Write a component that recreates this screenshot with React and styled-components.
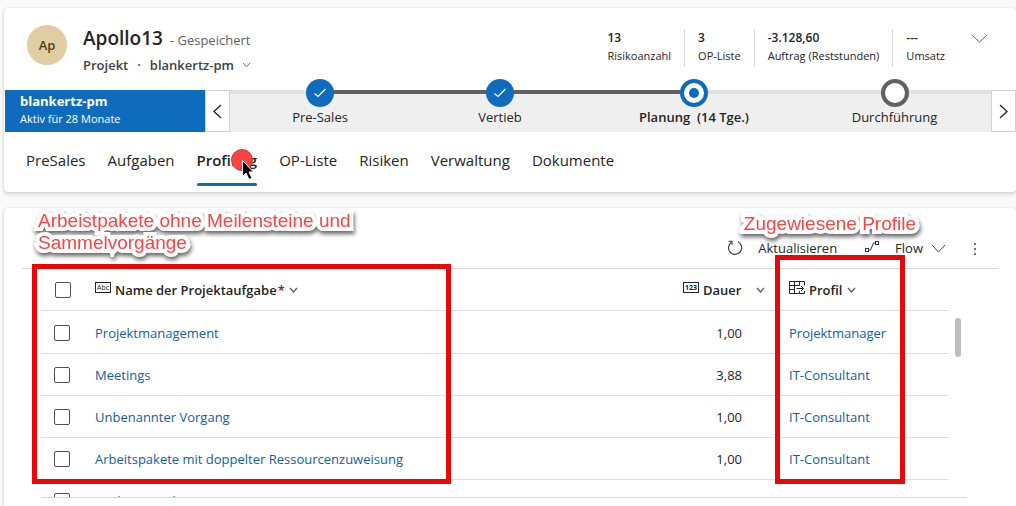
import React from "react";
import styled, { createGlobalStyle, css } from "styled-components";

const Global = createGlobalStyle`
  *, *::before, *::after { box-sizing: border-box; }
  html, body { margin: 0; height: 100%; overflow: hidden; }
  body {
    background: #fafafa;
    color: #242424;
    font-family: "Open Sans", "Noto Sans", sans-serif;
    font-size: 13px;
    line-height: 20px;
  }
  #root { height: 100%; }
  button { font: inherit; color: inherit; background: none; border: 0; padding: 0; cursor: pointer; }
  svg { display: block; flex: none; }
`;

const Page = styled.main`
  height: 100%;
  padding: 8px 0 0 4px;
  display: flex;
  flex-direction: column;
  gap: 16px;
`;

const Card = styled.section`
  background: #fff;
  border-radius: 4px;
  box-shadow: 0 0 2px rgba(0, 0, 0, 0.14), 0 2px 4px rgba(0, 0, 0, 0.14);
`;

const GridCard = styled(Card)`
  position: relative;
  flex: 1;
  border-radius: 4px 4px 0 0;
`;

const RecordHeader = styled.header`
  display: flex;
  align-items: flex-start;
  justify-content: space-between;
  height: 82px;
  padding: 17px 28px 0 23px;
`;

const Identity = styled.div`
  display: flex;
  gap: 16px;
`;

const Avatar = styled.div`
  width: 40px;
  height: 40px;
  border-radius: 50%;
  background: #e0cda2;
  color: #4f3f0c;
  font-weight: 600;
  line-height: 40px;
  text-align: center;
`;

const TitleRow = styled.div`
  display: flex;
  align-items: baseline;
  gap: 7px;
`;

const Title = styled.h1`
  margin: 0;
  font-size: 19px;
  font-weight: 600;
  line-height: 27px;
`;

const SaveState = styled.span`
  color: #616161;
`;

const SubRow = styled.div`
  display: flex;
  align-items: center;
  gap: 9px;
  padding-top: 3px;
  font-weight: 600;
  color: #424242;
`;

const FormPicker = styled.button`
  display: flex;
  align-items: center;
  gap: 8px;
  && { font-weight: 600; }
`;

const HeaderFields = styled.div`
  display: flex;
  align-items: flex-start;
  padding-top: 4px;
`;

const Field = styled.dl`
  margin: 0;
  padding: 0 13px;
  height: 38px;
  border-left: ${(p) => (p.$first ? "0" : "1px solid #d6d6d6")};
  font-size: 11px;
  line-height: 18px;
  display: flex;
  flex-direction: column-reverse;
  justify-content: flex-end;
`;
const FieldLabel = styled.dt``;
const FieldValue = styled.dd`
  margin: 0;
  font-size: 12px;
  font-weight: 600;
`;

const Expand = styled.button`
  margin: 5px 0 0 13px;
`;

const Process = styled.div`
  display: flex;
  height: 42px;
  margin-left: 1px;
`;

const ProcessName = styled.div`
  width: 200px;
  padding: 2px 15px;
  background: #0f6cbd;
  color: #fff;
  font-size: 11px;
  line-height: 18px;
`;

const Strong = styled.div`
  font-size: 13px;
  font-weight: 700;
`;

const Scroller = styled.button`
  width: 25px;
  display: flex;
  align-items: center;
  justify-content: center;
  && { background: #fff; border: 1px solid #d1d1d1; }
`;

const Stages = styled.ol`
  flex: 1;
  display: grid;
  grid-template-columns: 180fr 180fr 208fr 193fr;
  margin: 0;
  padding: 0;
  list-style: none;
  background: #efefef;
`;

const line = (done) => (done ? "#616161" : "#e0e0e0");

const Stage = styled.li`
  display: flex;
  flex-direction: column;
  align-items: center;
  background: linear-gradient(to right, ${(p) => line(p.$before)} 50%, ${(p) => line(p.$after)} 50%) top / 100% 4px no-repeat;
  font-weight: ${(p) => (p.$active ? 600 : 400)};
  white-space: pre;
`;

const markers = {
  done: css`background: #0f6cbd;`,
  active: css`background: #fff; border: 4px solid #0f6cbd;`,
  open: css`background: #fff; border: 4px solid #616161;`,
};

const Marker = styled.button`
  display: flex;
  align-items: center;
  justify-content: center;
  width: 28px;
  height: 28px;
  margin: -11px 0 0;
  && { border-radius: 50%; ${(p) => markers[p.$kind]} }
`;

const Dot = styled.span`
  width: 10px;
  height: 10px;
  border-radius: 50%;
  background: #0f6cbd;
`;

const Tabs = styled.nav`
  display: flex;
  gap: 22px;
  height: 60px;
  padding: 12px 22px 6px;
`;

const Tab = styled.button`
  position: relative;
  && {
    font-size: 15px;
    font-weight: ${(p) => (p.$active ? 600 : 400)};
    padding-bottom: 10px;
  }
  height: 42px;
  &::after {
    content: "";
    position: absolute;
    inset: auto 0 0;
    height: 3px;
    border-radius: 2px;
    background: ${(p) => (p.$active ? "#0f6cbd" : "transparent")};
  }
`;

const Pointer = styled.svg`
  position: absolute;
  left: 33px;
  top: 4px;
`;

const Toolbar = styled.div`
  display: flex;
  justify-content: flex-end;
  align-items: flex-end;
  gap: 27px;
  height: 61px;
  margin: 0 18px;
  padding: 0 21px 10px 0;
  border-bottom: 1px solid #d6d6d6;
`;

const Command = styled.button`
  display: flex;
  align-items: center;
  height: 20px;
  gap: ${(p) => p.$gap || 0}px;
`;

const Viewport = styled.div`
  height: 229px;
  overflow: hidden;
  margin: 0 49px 0 37px;
  display: flex;
  gap: 6px;
  border-bottom: 1px solid #d6d6d6;
`;

const Table = styled.table`
  flex: 1;
  border-collapse: separate;
  border-spacing: 0;
  table-layout: fixed;
`;

const Th = styled.th`
  height: 42px;
  padding: 0 0 0 ${(p) => p.$pad || 0}px;
  border-bottom: 1px solid #e0e0e0;
  text-align: left;
  font-weight: 600;
  width: ${(p) => p.$w || "auto"};
`;

const Body = styled.tbody`
  &::before {
    content: "";
    display: block;
    height: 1px;
  }
`;

const Td = styled.td`
  height: 42px;
  padding: 0 ${(p) => p.$right || 0}px 0 ${(p) => p.$pad || 0}px;
  border-bottom: 1px solid #e0e0e0;
  text-align: ${(p) => (p.$right ? "right" : "left")};
  white-space: nowrap;
`;

const HeadButton = styled.button`
  display: flex;
  align-items: center;
  gap: 4px;
  && { font-weight: 600; }
`;

const Required = styled.span`
  color: #b10e1c;
  margin-left: 1px;
`;

const Spread = styled.span`
  margin-left: ${(p) => p.$by || 0}px;
`;

const Check = styled.input`
  appearance: none;
  display: block;
  width: 16px;
  height: 16px;
  margin: 0;
  border: 1px solid #505050;
  border-radius: 2px;
  background: #fff;
`;

const Link = styled.a`
  color: #115ea3;
  text-decoration: none;
`;

const Thumb = styled.div`
  width: 6px;
  height: 39px;
  margin: 49px 6px 0 0;
  border-radius: 3px;
  background: #bdbdbd;
`;

const Highlight = styled.div`
  position: absolute;
  border: 5px solid #eb0707;
  pointer-events: none;
`;

const TaskHighlight = styled(Highlight)`
  left: 28px;
  top: 56px;
  width: 419px;
  height: 220px;
`;

const ProfileHighlight = styled(Highlight)`
  right: 111px;
  top: 47px;
  width: 130px;
  height: 229px;
`;

const Note = styled.p`
  position: absolute;
  margin: 0;
  color: #ff4343;
  font-family: "Liberation Sans", Arial, sans-serif;
  font-size: 19px;
  line-height: 22px;
  white-space: pre;
  -webkit-text-stroke: 8px #fff;
  paint-order: stroke fill;
  stroke-linejoin: round;
  filter: drop-shadow(1px 3px 2px rgba(0, 0, 0, 0.6));
`;

const TaskNote = styled(Note)`
  left: 34px;
  top: 2px;
`;

const ProfileNote = styled(Note)`
  right: 100px;
  top: 5px;
`;

const Chevron = ({ w = 8, h = 5, dir = "down", color = "#424242", sw = 1 }) => (
  <svg width={w + 2} height={h + 2} viewBox={`-1 -1 ${w + 2} ${h + 2}`} fill="none" stroke={color} strokeWidth={sw}>
    {dir === "down" && <path d={`M0 0L${w / 2} ${h}L${w} 0`} />}
    {dir === "left" && <path d={`M${w} 0L0 ${h / 2}L${w} ${h}`} />}
    {dir === "right" && <path d={`M0 0L${w} ${h / 2}L0 ${h}`} />}
  </svg>
);

const Tick = () => (
  <svg width="14" height="12" viewBox="0 0 14 12" fill="none" stroke="#fff" strokeWidth="1.2">
    <path d="M1.5 6.5L5 9.5L12.5 2" />
  </svg>
);

const Refresh = () => (
  <svg width="16" height="16" viewBox="0 0 16 16" fill="none" stroke="#333" strokeWidth="1.1">
    <path d="M11 1.8A6.6 6.6 0 1 1 4.5 2.2" />
    <path d="M1.5 1.2H5V4.8" />
  </svg>
);

const FlowIcon = () => (
  <svg width="16" height="14" viewBox="0 0 16 14" fill="none" stroke="#333" strokeWidth="1">
    <rect x="1.5" y="7.5" width="3" height="3" />
    <rect x="11.5" y="0.5" width="3" height="3" />
    <path d="M4.5 9H6.5L9.5 2H11.5" />
  </svg>
);

const More = () => (
  <svg width="4" height="16" viewBox="0 0 4 16" fill="#424242">
    <circle cx="2" cy="4" r="1" />
    <circle cx="2" cy="9" r="1" />
    <circle cx="2" cy="14" r="1" />
  </svg>
);

const TypeBadge = styled.span`
  width: 16px;
  height: 11px;
  border: 1px solid #242424;
  font-size: 7px;
  font-weight: ${(p) => (p.$bold ? 700 : 400)};
  line-height: 9px;
  text-align: center;
  margin-bottom: 5px;
`;

const LookupIcon = () => (
  <svg width="16" height="18" viewBox="0 0 16 18" fill="none" stroke="#242424" strokeWidth="1">
    <path d="M0.5 0.5H15.5V4.5M0.5 0.5V12.5H10.5M0.5 4.5H10.5M0.5 8.5H5.5M5.5 0.5V12.5M10.5 0.5V4.5M10.5 10V12.5H15.5V10M7.5 7.5H14.5M12 5L14.5 7.5L12 10" />
  </svg>
);

const stages = [
  { label: "Pre-Sales", kind: "done", before: false, after: true },
  { label: "Vertieb", kind: "done", before: true, after: true },
  { label: "Planung  (14 Tge.)", kind: "active", before: true, after: false },
  { label: "Durchführung", kind: "open", before: false, after: false },
];

const fields = [
  ["Risikoanzahl", "13"],
  ["OP-Liste", "3"],
  ["Auftrag (Reststunden)", "-3.128,60"],
  ["Umsatz", "---"],
];

const tabs = ["PreSales", "Aufgaben", "Profiling", "OP-Liste", "Risiken", "Verwaltung", "Dokumente"];

const rows = [
  ["Projektmanagement", "1,00", "Projektmanager"],
  ["Meetings", "3,88", "IT-Consultant"],
  ["Unbenannter Vorgang", "1,00", "IT-Consultant"],
  ["Arbeitspakete mit doppelter Ressourcenzuweisung", "1,00", "IT-Consultant"],
  ["Meilensteinaktivität", "", ""],
];

export default function App() {
  return (
    <>
      <Global />
      <Page>
        <Card>
          <RecordHeader>
            <Identity>
              <Avatar>Ap</Avatar>
              <div>
                <TitleRow>
                  <Title>Apollo13</Title>
                  <SaveState>- Gespeichert</SaveState>
                </TitleRow>
                <SubRow>
                  <span>Projekt</span>
                  <span>·</span>
                  <FormPicker>
                    blankertz-pm
                    <Chevron w={7} h={4} color="#757575" />
                  </FormPicker>
                </SubRow>
              </div>
            </Identity>
            <HeaderFields>
              {fields.map(([label, value], i) => (
                <Field key={label} $first={i === 0}>
                  <FieldLabel>{label}</FieldLabel>
                  <FieldValue>{value}</FieldValue>
                </Field>
              ))}
              <Expand aria-label="Kopfzeile erweitern">
                <Chevron w={15} h={7} color="#7a5c5c" />
              </Expand>
            </HeaderFields>
          </RecordHeader>
          <Process>
            <ProcessName>
              <Strong>blankertz-pm</Strong>
              Aktiv für 28 Monate
            </ProcessName>
            <Scroller aria-label="Zurück">
              <Chevron dir="left" w={7} h={13} color="#242424" sw={1.3} />
            </Scroller>
            <Stages>
              {stages.map((s) => (
                <Stage key={s.label} $before={s.before} $after={s.after} $active={s.kind === "active"}>
                  <Marker $kind={s.kind} aria-label={s.label}>
                    {s.kind === "done" && <Tick />}
                    {s.kind === "active" && <Dot />}
                  </Marker>
                  {s.label}
                </Stage>
              ))}
            </Stages>
            <Scroller aria-label="Weiter">
              <Chevron dir="right" w={7} h={13} color="#242424" sw={1.3} />
            </Scroller>
          </Process>
          <Tabs>
            {tabs.map((t) => (
              <Tab key={t} $active={t === "Profiling"}>
                {t}
                {t === "Profiling" && (
                  <Pointer width="26" height="36" viewBox="0 0 26 36">
                    <circle cx="12" cy="12" r="10.5" fill="#ff4343" stroke="#c93636" />
                    <path d="M12.5 12.5V28.5L16 25L19 31.5L22 30L19 24H23.5Z" fill="#000" stroke="#fff" strokeWidth="1" />
                  </Pointer>
                )}
              </Tab>
            ))}
          </Tabs>
        </Card>

        <GridCard>
          <Toolbar>
            <Command $gap={15}>
              <Refresh />
              Aktualisieren
            </Command>
            <Command $gap={15}>
              <FlowIcon />
              <Command as="span" $gap={8}>
                Flow
                <Chevron w={13} h={7} />
              </Command>
            </Command>
            <Command aria-label="Weitere Befehle">
              <More />
            </Command>
          </Toolbar>
          <Viewport>
            <Table>
              <thead>
                <tr>
                  <Th $w="54px" $pad={14}>
                    <Check type="checkbox" aria-label="Alle auswählen" />
                  </Th>
                  <Th>
                    <HeadButton>
                      <TypeBadge>Abc</TypeBadge>
                      <span>
                        Name der Projektaufgabe<Required>*</Required>
                      </span>
                      <Chevron w={7} h={4} color="#616161" sw={1.4} />
                    </HeadButton>
                  </Th>
                  <Th $w="106px">
                    <HeadButton>
                      <TypeBadge $bold>123</TypeBadge>
                      Dauer
                      <Spread $by={11}>
                        <Chevron w={7} h={4} color="#616161" sw={1.4} />
                      </Spread>
                    </HeadButton>
                  </Th>
                  <Th $w="160px">
                    <HeadButton>
                      <LookupIcon />
                      Profil
                      <Chevron w={7} h={4} color="#616161" sw={1.4} />
                    </HeadButton>
                  </Th>
                </tr>
              </thead>
              <Body>
                {rows.map(([name, duration, profile]) => (
                  <tr key={name}>
                    <Td $pad={13}>
                      <Check type="checkbox" aria-label={name} />
                    </Td>
                    <Td>
                      <Link href="#">{name}</Link>
                    </Td>
                    <Td $right={47}>{duration}</Td>
                    <Td>{profile && <Link href="#">{profile}</Link>}</Td>
                  </tr>
                ))}
              </Body>
            </Table>
            <Thumb />
          </Viewport>
          <TaskHighlight />
          <ProfileHighlight />
          <TaskNote>
            {"Arbeistpakete ohne Meilensteine und\nSammelvorgänge"}
          </TaskNote>
          <ProfileNote>Zugewiesene Profile</ProfileNote>
        </GridCard>
      </Page>
    </>
  );
}
